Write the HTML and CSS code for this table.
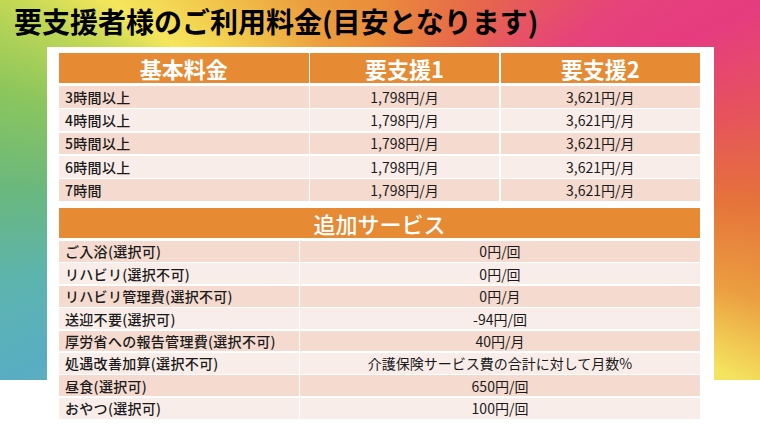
FILE: index.html
```html
<!DOCTYPE html>
<html lang="ja">
<head>
<meta charset="utf-8">
<title>要支援者様のご利用料金</title>
<link rel="stylesheet" href="styles.css">
</head>
<body>
<div class="page">
  <h1 class="title">要支援者様のご利用料金(目安となります)</h1>
  <main class="panel">
    <div class="tbl fee">
      <div class="head"><div>基本料金</div><div>要支援1</div><div>要支援2</div></div>
      <div class="row dark"><div class="lbl">3時間以上</div><div>1,798円/月</div><div>3,621円/月</div></div>
      <div class="row light"><div class="lbl">4時間以上</div><div>1,798円/月</div><div>3,621円/月</div></div>
      <div class="row dark"><div class="lbl">5時間以上</div><div>1,798円/月</div><div>3,621円/月</div></div>
      <div class="row light"><div class="lbl">6時間以上</div><div>1,798円/月</div><div>3,621円/月</div></div>
      <div class="row dark"><div class="lbl">7時間</div><div>1,798円/月</div><div>3,621円/月</div></div>
    </div>
    <div class="tbl extra">
      <div class="head"><div class="span">追加サービス</div></div>
      <div class="row dark"><div class="lbl">ご入浴(選択可)</div><div>0円/回</div></div>
      <div class="row light"><div class="lbl">リハビリ(選択不可)</div><div>0円/回</div></div>
      <div class="row dark"><div class="lbl">リハビリ管理費(選択不可)</div><div>0円/月</div></div>
      <div class="row light"><div class="lbl">送迎不要(選択可)</div><div>-94円/回</div></div>
      <div class="row dark"><div class="lbl">厚労省への報告管理費(選択不可)</div><div>40円/月</div></div>
      <div class="row light"><div class="lbl">処遇改善加算(選択不可)</div><div>介護保険サービス費の合計に対して月数%</div></div>
      <div class="row dark"><div class="lbl">昼食(選択可)</div><div>650円/回</div></div>
      <div class="row light"><div class="lbl">おやつ(選択可)</div><div>100円/回</div></div>
    </div>
  </main>
</div>
</body>
</html>
```
FILE: styles.css
```css
html, body {
  margin: 0;
  padding: 0;
}
body {
  width: 760px;
  height: 424px;
  overflow: hidden;
  font-family: "Noto Sans CJK JP", "Noto Sans", sans-serif;
  color: #1a1a1a;
  background:
    conic-gradient(from 0deg at 50% 50%,
      #ea8c3a 0deg,
      #e6654c 30deg,
      #e6437a 52deg,
      #e63c80 64deg,
      #e6535c 78deg,
      #e5733a 92deg,
      #eb9e40 106deg,
      #f4e35e 118deg,
      #f0e060 180deg,
      #58adc2 243deg,
      #5db4ae 256deg,
      #6ab87e 270deg,
      #8cc65c 285deg,
      #c2d855 297deg,
      #f5e65c 305deg,
      #f1c64a 318deg,
      #eb9e3e 338deg,
      #ea8c3a 360deg) left top / 760px 380px no-repeat,
    #ffffff;
}
.page {
  display: flex;
  flex-direction: column;
}
.title {
  margin: 0;
  padding: 0 0 5px 14px;
  height: 42px;
  line-height: 42px;
  font-size: 28px;
  font-weight: 700;
  color: #000;
  white-space: nowrap;
}
.panel {
  margin-left: 47px;
  width: 667px;
  height: 377px;
  background: #fff;
  box-sizing: border-box;
  padding: 6px 14px 0 12px;
  display: flex;
  flex-direction: column;
  gap: 7px;
}
.tbl {
  display: grid;
  column-gap: 1.5px;
  row-gap: 1.5px;
}
.fee {
  grid-template-columns: 249.5px 189px 1fr;
}
.extra {
  grid-template-columns: 239.5px 1fr;
}
.head, .row {
  display: contents;
}
.head > div {
  background: #e68a33;
  color: #fff;
  height: 30px;
  margin-bottom: 1.5px;
  display: flex;
  align-items: center;
  justify-content: center;
  font-size: 22px;
  font-weight: 700;
}
.extra .head > div {
  font-weight: 500;
}
.head .span {
  grid-column: 1 / -1;
}
.row > div {
  display: flex;
  align-items: center;
  justify-content: center;
  font-size: 14px;
  white-space: nowrap;
}
.fee .row > div {
  height: 21.8px;
}
.extra .row > div {
  height: 20.9px;
}
.row > .lbl {
  justify-content: flex-start;
  padding-left: 6px;
  font-weight: 500;
  letter-spacing: 0.3px;
}
.dark > div {
  background: #f5dacf;
}
.light > div {
  background: #f9ede9;
}
```
